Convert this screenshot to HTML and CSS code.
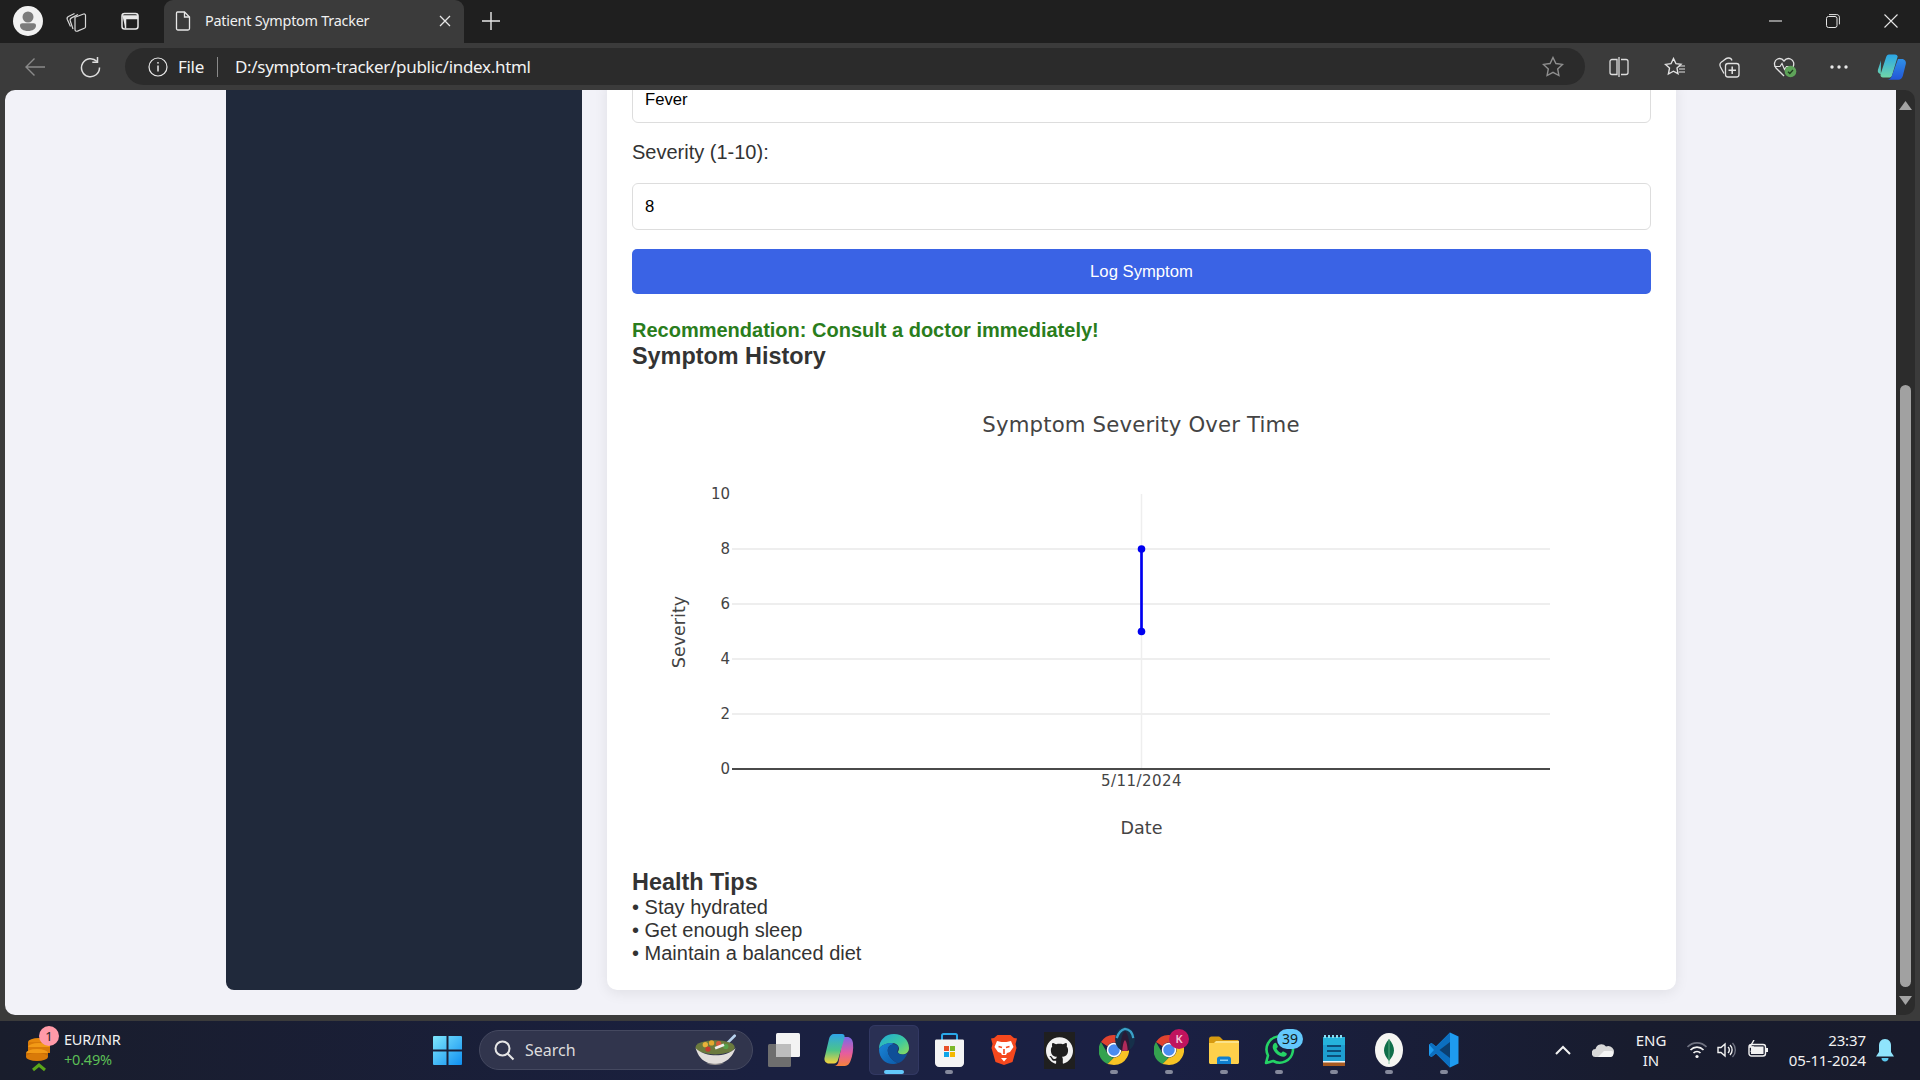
FILE: index.html
```html
<!DOCTYPE html>
<html lang="en">
<head>
<meta charset="utf-8">
<title>Patient Symptom Tracker</title>
<link rel="stylesheet" href="styles.css">
</head>
<body>
<div class="window">
  <header class="titlebar">
    <span class="tb-btn avatar-slot"><svg width="30" height="30" viewBox="0 0 30 30"><circle cx="15" cy="15" r="15" fill="#f2f2f2"/><circle cx="15" cy="11" r="5.5" fill="#7c7c7c"/><path d="M7 19.5c0-1.5 1-2.300 2.400-2.300h11.200c1.400 0 2.400.8 2.400 2.300 0 3.400-3.400 5.500-8 5.500s-8-2.100-8-5.500z" fill="#7c7c7c"/></svg></span>
    <span class="tb-btn workspaces-slot"><svg width="24" height="24" viewBox="0 0 24 24" fill="none" stroke="#d8d8d8" stroke-width="1.200"><path d="M5.500 17.500L2.300 10.500c-.5-1.300-.1-2.400 1.100-3l6.100-3"/><path d="M8 20L5.300 12c-.4-1.300 0-2.500 1.200-3.100l6.500-3.400"/><path d="M10 8.200l8.600-3.200c1-.3 1.900.3 1.900 1.300v11.400c0 .8-.4 1.300-1.200 1.600l-6.800 2.800c-1.300.5-2.500-.3-2.500-1.700z"/></svg></span>
    <span class="tb-btn tabs-slot"><svg width="20" height="20" viewBox="0 0 20 20" fill="none" stroke="#e8e8e8" stroke-width="1.500"><rect x="2" y="2.500" width="16" height="15.500" rx="2.500"/><path d="M2.500 5h15v2.500H5.500v10" fill="#e8e8e8"/></svg></span>
    <div class="tab">
      <svg class="tab-doc" width="16" height="20" viewBox="0 0 16 20" fill="none" stroke="#e8e8e8" stroke-width="1.300"><path d="M2.500 1h7l5 5v11.500c0 .9-.7 1.500-1.500 1.500H3c-.9 0-1.500-.6-1.500-1.500v-15C1.500 1.500 1.800 1 2.500 1z"/><path d="M9.500 1v5h5"/></svg>
      <span class="tab-title">Patient Symptom Tracker</span>
      <svg class="tab-close" width="12" height="12" viewBox="0 0 12 12" stroke="#e8e8e8" stroke-width="1.300"><path d="M1 1l10 10M11 1L1 11"/></svg>
    </div>
    <svg class="new-tab" width="18" height="18" viewBox="0 0 18 18" stroke="#e8e8e8" stroke-width="1.400"><path d="M9 0v18M0 9h18"/></svg>
    <div class="win-controls">
      <span class="win-btn win-min"><svg width="14" height="14" viewBox="0 0 14 14" stroke="#e6e6e6" stroke-width="1.100"><path d="M0 7h13"/></svg></span>
      <span class="win-btn"><svg width="14" height="14" viewBox="0 0 14 14" fill="none" stroke="#e6e6e6" stroke-width="1"><rect x=".5" y="2.500" width="10.500" height="11" rx="2"/><path d="M3 .6h7.800c1.400 0 2.600 1.100 2.600 2.600v7.200"/></svg></span>
      <span class="win-btn"><svg width="14" height="14" viewBox="0 0 14 14" stroke="#e6e6e6" stroke-width="1.100"><path d="M.5.500l13 13M13.500.500l-13 13"/></svg></span>
    </div>
  </header>

  <nav class="toolbar">
    <span class="tool-btn"><svg width="22" height="20" viewBox="0 0 22 20" fill="none" stroke="#8a8a8a" stroke-width="1.400"><path d="M21 10H2M10.500 1.500L2 10l8.500 8.500"/></svg></span>
    <span class="tool-btn"><svg width="22" height="22" viewBox="0 0 22 22" fill="none" stroke="#dedede" stroke-width="1.500"><path d="M18 5.500a9 9 0 1 0 2.500 6"/><path d="M18.500 1v5.200h-5.200"/></svg></span>
    <div class="address">
      <svg class="info" width="20" height="20" viewBox="0 0 20 20" fill="none" stroke="#e8e8e8" stroke-width="1.200"><circle cx="10" cy="10" r="9"/><path d="M10 8.500v6" stroke-width="1.500"/><circle cx="10" cy="5.800" r=".9" fill="#e8e8e8" stroke="none"/></svg>
      <span class="addr-file">File</span>
      <span class="addr-sep"></span>
      <span class="addr-url">D:/symptom-tracker/public/index.html</span>
      <svg class="addr-star" width="22" height="21" viewBox="0 0 22 21" fill="none" stroke="#8f8f8f" stroke-width="1.400"><path d="M11 1.500l2.900 6 6.600.9-4.800 4.600 1.200 6.500-5.900-3.200-5.900 3.200 1.200-6.500L1.500 8.400l6.600-.9z"/></svg>
    </div>
    <span class="tool-btn first-right"><svg width="20" height="20" viewBox="0 0 20 20" fill="none" stroke="#dcdcdc" stroke-width="1.300"><path d="M8 2.500H3a2 2 0 0 0-2 2v11a2 2 0 0 0 2 2h5zM12 2.500h5a2 2 0 0 1 2 2v11a2 2 0 0 1-2 2h-5"/><path d="M10 0v20"/></svg></span>
    <span class="tool-btn fav-btn"><svg width="22" height="20" viewBox="0 0 22 20" fill="none" stroke="#e2e2e2" stroke-width="1.400"><path d="M9.500 1.500l2.500 5.200 5 .6-4 3.800 1 5.600-4.600-2.500-5 2.800 1.100-5.900L1.500 7.400l5.500-.7z"/><path d="M15 9h6M15 12h6M15 15h6" stroke-width="1.200"/></svg></span>
    <span class="tool-btn coll-btn"><svg width="22" height="22" viewBox="0 0 22 22" fill="none" stroke="#e2e2e2" stroke-width="1.300"><path d="M6 17.500L2.500 11c-1-2 -.6-3.800 1-5l1.800-1.300C6.500 3.800 8 2 10 2h1c1.500 0 2.500 1 3 2.500"/><rect x="7.500" y="7.500" width="13.500" height="13.500" rx="2.500"/><path d="M14.200 10.500v7.500M10.500 14.200H18" stroke-width="1.500"/></svg></span>
    <span class="tool-btn health-btn"><svg width="24" height="22" viewBox="0 0 24 22" fill="none"><path d="M11 20L3 12C.5 9 1.200 4.500 4.500 3c2.500-1 5 0 6.500 2 1.500-2 4-3 6.500-2 3.300 1.500 4 5 2.500 8" stroke="#e2e2e2" stroke-width="1.300"/><path d="M1.500 10.500H7l2-3 2.500 6 2-3h3" stroke="#e2e2e2" stroke-width="1.200"/><circle cx="17.500" cy="15.500" r="5.800" fill="#5fa45a"/><path d="M15 15.700l1.800 1.800 3.200-3.500" stroke="#1f3b1e" stroke-width="1.300"/></svg></span>
    <span class="tool-btn"><svg width="18" height="4" viewBox="0 0 18 4" fill="#e8e8e8"><circle cx="2" cy="2" r="1.700"/><circle cx="9" cy="2" r="1.700"/><circle cx="16" cy="2" r="1.700"/></svg></span>
    <span class="copilot-slot"><svg width="30" height="28" viewBox="0 0 30 28"><defs><linearGradient id="cpA" x1="0" y1="0" x2="0" y2="1"><stop offset="0" stop-color="#2aa6e8"/><stop offset="1" stop-color="#6fd6a8"/></linearGradient><linearGradient id="cpB" x1="0" y1="0" x2="0" y2="1"><stop offset="0" stop-color="#2f8fe6"/><stop offset="1" stop-color="#2257d8"/></linearGradient></defs><path d="M12 1h6c1.500 0 2.300.8 2.700 2L15 22c-.5 1.600-1.500 2-3 2H6c-1.400-.1-2.800-1.200-2.500-3L9 4c.5-1.800 1.500-3 3-3zM4 7l-3 9c-.8 2.500.5 4.300 2.800 4.500z" fill="url(#cpA)" transform="translate(0,.5)"/><path d="M21 4h4c2.500 0 4.500 2.500 3.800 5l-3 12c-.7 2.400-2.300 3.700-4.500 3.700H10c2.500 0 4-1.500 4.800-3.700z" fill="url(#cpB)" transform="translate(0,2)"/></svg></span>
  </nav>

  <div class="viewport">
    <main class="page">
      <div class="container">
        <aside class="sidebar"></aside>
        <section class="card">
          <input class="field" type="text" value="Fever">
          <label class="field-label">Severity (1-10):</label>
          <input class="field" type="text" value="8">
          <button class="submit" type="button">Log Symptom</button>
          <p class="recommendation">Recommendation: Consult a doctor immediately!</p>
          <h3 class="heading">Symptom History</h3>
          <svg class="chart" width="1019" height="500" viewBox="0 0 1019 500">
            <text class="c-title" x="509" y="63" text-anchor="middle">Symptom Severity Over Time</text>
            <g class="c-grid">
              <path class="c-grid-v" d="M509.500 125V400"/>
              <path d="M100 180H918M100 235H918M100 290H918M100 345H918"/>
            </g>
            <path class="c-zero" d="M100 400H918"/>
            <g class="c-tick" text-anchor="end">
              <text x="98" y="130">10</text>
              <text x="98" y="185">8</text>
              <text x="98" y="240">6</text>
              <text x="98" y="295">4</text>
              <text x="98" y="350">2</text>
              <text x="98" y="405">0</text>
            </g>
            <text class="c-tick c-date" x="509.500" y="417" text-anchor="middle">5/11/2024</text>
            <text class="c-axis" x="509.500" y="465" text-anchor="middle">Date</text>
            <text class="c-axis" transform="translate(53 263) rotate(-90)" text-anchor="middle">Severity</text>
            <path class="c-line" d="M509.500 180V262"/>
            <circle class="c-dot" cx="509.500" cy="180" r="3.800"/>
            <circle class="c-dot" cx="509.500" cy="262.500" r="3.800"/>
          </svg>
          <h3 class="tips-title">Health Tips</h3>
          <ul class="tips">
            <li>• Stay hydrated</li>
            <li>• Get enough sleep</li>
            <li>• Maintain a balanced diet</li>
          </ul>
        </section>
      </div>
    </main>
    <div class="scrollbar">
      <svg width="13" height="9" viewBox="0 0 13 9" fill="#a3a3a3"><path d="M6.500 0L13 9H0z"/></svg>
      <div class="scroll-track"><div class="scroll-thumb"></div></div>
      <svg width="13" height="9" viewBox="0 0 13 9" fill="#a3a3a3"><path d="M0 0h13L6.500 9z"/></svg>
    </div>
  </div>

  <footer class="taskbar">
    <div class="widget">
      <span class="widget-icon">
        <svg width="30" height="42" viewBox="0 0 30 42"><ellipse cx="14" cy="10" rx="11" ry="4" fill="#e8890c"/><rect x="3" y="10" width="22" height="5" fill="#d97a08"/><ellipse cx="14" cy="15" rx="11" ry="4" fill="#f29a16"/><rect x="3" y="15" width="22" height="6" fill="#d97a08"/><ellipse cx="12" cy="21" rx="11" ry="4" fill="#f29a16"/><rect x="1" y="21" width="22" height="4" fill="#c96e06"/><ellipse cx="12" cy="25" rx="11" ry="4" fill="#d97a08"/><path d="M8 38l6-5 6 5" fill="none" stroke="#5aa51a" stroke-width="3"/></svg>
        <span class="widget-badge">1</span>
      </span>
      <div class="widget-text"><div>EUR/INR</div><div class="widget-up">+0.49%</div></div>
    </div>
    <span class="start"><svg width="29" height="29" viewBox="0 0 29 29"><defs><linearGradient id="win" x1="0" y1="0" x2="1" y2="1"><stop offset="0" stop-color="#7fe6fd"/><stop offset="1" stop-color="#0f8ff0"/></linearGradient></defs><path d="M1 0h12.500v13.500H0V1a1 1 0 0 1 1-1zM15.500 0H28a1 1 0 0 1 1 1v12.500H15.500zM0 15.500h13.500V29H1a1 1 0 0 1-1-1zM15.500 15.500H29V28a1 1 0 0 1-1 1H15.500z" fill="url(#win)"/></svg></span>
    <div class="search">
      <svg width="22" height="22" viewBox="0 0 22 22" fill="none" stroke="#e6e6e6" stroke-width="2"><circle cx="9.500" cy="9.500" r="7"/><path d="M14.500 14.500l6 6"/></svg>
      <span class="search-text">Search</span>
      <svg class="bowl" width="46" height="32" viewBox="0 0 50 36"><path d="M36 12L46 2" stroke="#b9d3ee" stroke-width="3" stroke-linecap="round"/><ellipse cx="24" cy="15" rx="22" ry="8" fill="#6b7a3e"/><circle cx="13" cy="12" r="3" fill="#e8b23a"/><circle cx="20" cy="10" r="3" fill="#e2a82e"/><circle cx="28" cy="11" r="3" fill="#d65a3a"/><circle cx="36" cy="14" r="3" fill="#58a04a"/><circle cx="16" cy="17" r="3" fill="#c23b2e"/><path d="M24 16l10-4" stroke="#eee" stroke-width="3"/><path d="M2 16c2 5 4 12 13 16 6 2.500 12 2.500 18 0 9-4 12-11 14-16-6 6-14 8-22 8s-17-2-23-8z" fill="#e2dedb"/><path d="M14 33c6 2.500 14 2.500 20 0-6 .5-14 .5-20 0z" fill="#9a9592"/></svg>
    </div>
    <div class="apps">
      <span class="app"><svg width="32" height="34" viewBox="0 0 32 34"><rect x="0" y="11" width="23" height="23" rx="1.500" fill="#6e6e6e"/><rect x="8" y="0" width="24" height="24" rx="1.500" fill="#f3f3f3"/><rect x="8" y="11" width="15" height="13" fill="#bdbdbd"/></svg></span>
      <span class="app"><svg width="30" height="34" viewBox="0 0 30 34"><defs><linearGradient id="coA" x1="0" y1="0" x2="0" y2="1"><stop offset="0" stop-color="#2fa4e8"/><stop offset=".55" stop-color="#4cc48a"/><stop offset="1" stop-color="#f5d33c"/></linearGradient><linearGradient id="coB" x1="0" y1="0" x2="0" y2="1"><stop offset="0" stop-color="#7a6ae8"/><stop offset=".55" stop-color="#e65ca0"/><stop offset="1" stop-color="#f5823c"/></linearGradient></defs><path d="M19 4h4c3.500 0 5.500 2.500 6 6 .7 6-.5 13-2.500 18-.8 2.500-2.800 5-5.500 5H10c2.500 0 4-2 4.500-4z" fill="url(#coB)"/><path d="M10 1h8c2 0 3 1.500 2.500 3.500L14 27c-.6 2-2 3.500-4 3.500H5C2 30.500 0 28 .5 25L5 6c.6-3 2.500-5 5-5z" fill="url(#coA)"/></svg></span>
      <span class="app app-active"><svg width="30" height="32" viewBox="0 0 30 32"><defs><linearGradient id="edA" x1="0" y1="0" x2="1" y2="1"><stop offset="0" stop-color="#1fa8d8"/><stop offset=".55" stop-color="#3cc8a0"/><stop offset="1" stop-color="#8fdc5a"/></linearGradient><linearGradient id="edB" x1="0" y1="0" x2="1" y2="1"><stop offset="0" stop-color="#1a86d8"/><stop offset="1" stop-color="#0c5aa8"/></linearGradient></defs><path d="M0 15C0 6 6.500 0 15 0s15 6 15 14c0 4-3 6.500-6.500 6.500-2.500 0-4.500-1-4.500-2.500 0-1 1-1.500 1-3.500 0-3-3-5.500-6.500-5.500C7 9 2 11.500 0 15z" fill="url(#edA)"/><path d="M0 15c2-3.500 7-6 11.500-6 1.500 0 3 .5 4 1.200C10 10.500 8 14 9 18.500c1 4.500 5 8.500 10 10.500-1.500.8-3.500 1-5 1C6 30 0 24 0 15z" fill="url(#edB)"/><path d="M15.500 10.200c3 .4 4.500 3 3.500 4.800-1 2-1 4 1.500 5 3 1.200 6 .5 8-1-2.500 6-6 9.500-9.500 10C14 27 10 23 9 18.500 8 14 10 10.500 15.500 10.200z" fill="#0f4f98"/></svg><i class="running-bar"></i></span>
      <span class="app"><svg width="29" height="34" viewBox="0 0 29 34"><path d="M7 7V2.500C7 1.500 7.500 1 8.500 1h12c1 0 1.500.5 1.500 1.500V7" fill="none" stroke="#2aa8e8" stroke-width="2"/><path d="M0 8c0-1 .5-1.500 1.500-1.500h26c1 0 1.500.5 1.500 1.500v22c0 2.200-1.800 4-4 4H4c-2.200 0-4-1.800-4-4z" fill="#f4f4f4"/><rect x="9" y="13" width="5" height="5" fill="#e8502a"/><rect x="15" y="13" width="5" height="5" fill="#7cb82a"/><rect x="9" y="19" width="5" height="5" fill="#0ea5e8"/><rect x="15" y="19" width="5" height="5" fill="#f5b800"/></svg><i class="dot"></i></span>
      <span class="app"><svg width="26" height="30" viewBox="0 0 26 30"><path d="M6.500 0h13L23 3l3 .5L24.500 9l1 4-4 14-8.500 3-8.500-3-4-14 1-4L0 3.500 3 3z" fill="#f5481e"/><path d="M6 6l4.500 1h5L20 6l2.500 6-3.500 5-3 1-1 2h-4l-1-2-3-1-3.500-5z" fill="#fff"/><path d="M10 23h6l-3 3.500z" fill="#fff"/><path d="M7.500 11.500l3.500 1M18.500 11.500l-3.500 1M13 14v5" stroke="#f5481e" stroke-width="1.600" fill="none"/></svg></span>
      <span class="app"><span class="gh-tile"><svg width="27" height="27" viewBox="0 0 24 24" fill="#f2f2f2"><path d="M12 .297c-6.630 0-12 5.373-12 12 0 5.303 3.438 9.800 8.205 11.385.6.113.82-.258.82-.577 0-.285-.01-1.040-.015-2.040-3.338.724-4.042-1.610-4.042-1.610C4.422 18.070 3.633 17.700 3.633 17.700c-1.087-.744.084-.729.084-.729 1.205.084 1.838 1.236 1.838 1.236 1.070 1.835 2.809 1.305 3.495.998.108-.776.417-1.305.76-1.605-2.665-.3-5.466-1.332-5.466-5.930 0-1.310.465-2.380 1.235-3.220-.135-.303-.54-1.523.105-3.176 0 0 1.005-.322 3.300 1.230.96-.267 1.980-.399 3-.405 1.020.006 2.040.138 3 .405 2.280-1.552 3.285-1.230 3.285-1.230.645 1.653.25 2.873.12 3.176.765.84 1.230 1.910 1.230 3.220 0 4.610-2.805 5.625-5.475 5.920.42.360.81 1.096.81 2.220 0 1.606-.015 2.896-.015 3.286 0 .315.21.690.825.570C20.565 22.092 24 17.592 24 12.297c0-6.627-5.373-12-12-12"/></svg></span></span>
      <span class="app"><svg class="chrome" width="30" height="30" viewBox="0 0 30 30"><path d="M15 0a15 15 0 0 1 13 7.500H15a7.500 7.500 0 0 0-6.500 3.750L2 7A15 15 0 0 1 15 0z" fill="#e0432f"/><path d="M2 7l6.500 11.250A7.500 7.500 0 0 0 15 22.500L8.500 29A15 15 0 0 1 2 7z" fill="#34a24f"/><path d="M28 7.500A15 15 0 0 1 15 30l-6.500-1 6.500-6.500a7.500 7.500 0 0 0 6.500-11.250z" fill="#f7c325"/><circle cx="15" cy="15" r="6.500" fill="#4a8cf0" stroke="#fff" stroke-width="1.500"/></svg><span class="profile profile-photo"><svg width="20" height="24" viewBox="0 0 20 26"><path d="M5 26c0-9 1-18 5-22 4 4 5 13 5 22z" fill="#2a1a35"/><path d="M7 26c.5-6 1-10 3-12 2 2 2.500 6 3 12z" fill="#b02a5a"/><path d="M1 12C3 6 6 3 10 2c5 .5 8 4 9 10" fill="none" stroke="#3aa0c8" stroke-width="2.500"/></svg></span><i class="dot"></i></span>
      <span class="app"><svg class="chrome" width="30" height="30" viewBox="0 0 30 30"><path d="M15 0a15 15 0 0 1 13 7.500H15a7.500 7.500 0 0 0-6.500 3.750L2 7A15 15 0 0 1 15 0z" fill="#e0432f"/><path d="M2 7l6.500 11.250A7.500 7.500 0 0 0 15 22.500L8.500 29A15 15 0 0 1 2 7z" fill="#34a24f"/><path d="M28 7.500A15 15 0 0 1 15 30l-6.500-1 6.500-6.500a7.500 7.500 0 0 0 6.500-11.250z" fill="#f7c325"/><circle cx="15" cy="15" r="6.500" fill="#4a8cf0" stroke="#fff" stroke-width="1.500"/></svg><span class="profile profile-k">K</span><i class="dot"></i></span>
      <span class="app"><svg width="30" height="28" viewBox="0 0 30 28"><path d="M0 3c0-1.500 1-2.500 2.500-2.500h7c1 0 1.500.5 2.500 1.500L14 4h14.500c.8 0 1.500.7 1.500 1.500V10H0z" fill="#d69a10"/><path d="M0 7h30v19.500c0 .8-.7 1.500-1.500 1.500h-27C.7 28 0 27.300 0 26.500z" fill="#fdd04b"/><path d="M5 7l2-2h23v2z" fill="#fbe38a"/><path d="M8 23c0-1.500 1-2.500 2.500-2.500h9c1.500 0 2.500 1 2.500 2.500v5H8z" fill="#0f7fd0"/><rect x="11" y="23.500" width="8" height="1.500" fill="#8dd0f5"/></svg><i class="dot"></i></span>
      <span class="app"><svg width="32" height="32" viewBox="0 0 32 32" fill="none"><path d="M3 29l2-7.500A13.200 13.200 0 1 1 10.300 27z" stroke="#25d366" stroke-width="2.600" stroke-linejoin="round"/><path d="M11 9.500c1-1 2-1 2.500 0l1.200 2.500c.3.600 0 1.300-.5 1.800l-.7.700c1 2 2.500 3.500 4.700 4.500l1-1c.5-.5 1-.6 1.700-.3l2.300 1.200c.8.500.8 1.500 0 2.500-1.500 1.600-3.500 1.700-6 .6-3.500-1.500-6-4-7.200-7.300-.7-2-.2-3.800 1-5.200z" fill="#25d366"/></svg><span class="count-badge">39</span><i class="dot"></i></span>
      <span class="app"><svg width="22" height="31" viewBox="0 0 22 31"><path d="M0 2h22v27H0z" fill="#1e9fd0"/><path d="M0 2h22v8H0z" fill="#25b3dc"/><path d="M2 0v3M6 0v3M10 0v3M14 0v3M18 0v3" stroke="#8adcf0" stroke-width="2"/><path d="M4 11h14M4 16h14M4 21h14" stroke="#0c4f7a" stroke-width="2"/><path d="M0 27h22v4H0z" fill="#a85a20"/><path d="M0 26h22v1.500H0z" fill="#eaf6fa"/></svg><i class="dot"></i></span>
      <span class="app"><svg width="28" height="34" viewBox="0 0 28 34"><ellipse cx="14" cy="17" rx="14" ry="17" fill="#f5f5f2"/><path d="M14 6c3.500 4 5 8 5 11.500S16.500 25 14 28c-2.500-3-5-7-5-10.500S10.500 10 14 6z" fill="#0f6e4a"/><path d="M14 6v25" stroke="#6bb890" stroke-width=".8"/></svg><i class="dot"></i></span>
      <span class="app"><svg width="30" height="36" viewBox="0 0 30 36"><path d="M21 .5l8.500 4v27l-8.500 4L7 21.500l-4.500 3.500L0 23.500v-11L2.500 11 7 14.500z" fill="#1e9bf0"/><path d="M21 .5L7 14.500 2.500 11 0 12.500 5 18 0 23.500 2.500 25 7 21.500l14 14z" fill="#0c6fc0"/><path d="M21 10v16l-10.500-8z" fill="#0c3f70"/></svg><i class="dot"></i></span>
    </div>
    <div class="tray">
      <span class="tray-slot chev"><svg width="16" height="10" viewBox="0 0 16 10" fill="none" stroke="#f2f2f2" stroke-width="2"><path d="M1 9l7-7 7 7"/></svg></span>
      <span class="tray-slot cloud"><svg width="22" height="14" viewBox="0 0 22 14"><path d="M4 14a4 4 0 0 1-.5-8A6 6 0 0 1 14 3.500 4.500 4.500 0 0 1 18.500 14z" fill="#d8d8d8"/><path d="M6 14l6-6 8 0c2 1 2 6-1.500 6z" fill="#f5f5f5"/></svg></span>
      <div class="lang"><div>ENG</div><div>IN</div></div>
      <span class="tray-slot sys"><svg width="20" height="18" viewBox="0 0 20 18" fill="none" stroke="#f2f2f2" stroke-width="1.700"><path d="M.5 6a13 13 0 0 1 19 0" stroke="#6f7280"/><path d="M3.500 9a9 9 0 0 1 13 0"/><path d="M6.500 12a5 5 0 0 1 7 0"/><circle cx="10" cy="15.500" r="1.600" fill="#f2f2f2" stroke="none"/></svg></span>
      <span class="tray-slot sys"><svg width="20" height="18" viewBox="0 0 20 18" fill="none" stroke="#f2f2f2" stroke-width="1.400"><path d="M1 6.500h3L8 3v12l-4-3.500H1z"/><path d="M11 6a4 4 0 0 1 0 6M13 4a7 7 0 0 1 0 10"/><path d="M15.500 2a10 10 0 0 1 0 14" stroke="#6f7280"/></svg></span>
      <span class="tray-slot batt"><svg width="21" height="20" viewBox="0 0 21 20" fill="none"><rect x="1" y="4.500" width="16.500" height="11.500" rx="2.500" stroke="#f2f2f2" stroke-width="1.400"/><rect x="3" y="6.500" width="12.500" height="7.500" fill="#f2f2f2"/><path d="M19 8v4" stroke="#f2f2f2" stroke-width="2"/><path d="M6 0L2 7h3l-2 5" stroke="#f2f2f2" stroke-width="1.400"/></svg></span>
      <div class="clock"><div>23:37</div><div>05-11-2024</div></div>
      <span class="tray-slot bell"><svg width="18" height="23" viewBox="0 0 18 23"><path d="M9 0c-4 0-6 3-6 6.500V13L0 17.500h18L15 13V6.500C15 3 13 0 9 0z" fill="#8fe4fc"/><path d="M5.500 19h7c0 2-1.500 3.500-3.500 3.500S5.500 21 5.500 19z" fill="#5cc8ee"/></svg></span>
    </div>
  </footer>
</div>
</body>
</html>
```

FILE: styles.css
```css
* { box-sizing: border-box; }
html, body { margin: 0; height: 100%; overflow: hidden; }
body { font-family: "Liberation Sans", Arial, sans-serif; background: #3b3b3b; }
svg { display: block; flex: none; }

.window { width: 1920px; height: 1080px; display: flex; flex-direction: column; }

/* Browser title bar */
.titlebar { height: 43px; flex: none; background: #1f1f1f; display: flex; align-items: center; padding-bottom: 1px; }
.tb-btn { display: flex; align-items: center; justify-content: center; }
.avatar-slot { width: 56px; }
.workspaces-slot { width: 42px; }
.tabs-slot { width: 64px; }
.tab { width: 300px; height: 43px; align-self: flex-start; margin-left: 2px; background: #3b3b3b; border-radius: 9px 9px 0 0; display: flex; align-items: center; padding: 0 13px 1px 11px; color: #f0f0f0; }
.tab-title { margin-left: 14px; font: 14.4px/1 "Noto Sans", sans-serif; letter-spacing: -.25px; white-space: nowrap; }
.tab-close { margin-left: auto; }
.new-tab { margin-left: 18px; }
.win-controls { margin-left: auto; display: flex; }
.win-btn { width: 58px; display: flex; justify-content: center; }
.win-min { width: 56px; }

/* Browser toolbar */
.toolbar { height: 47px; flex: none; background: #3b3b3b; display: flex; align-items: center; padding-left: 7.5px; }
.tool-btn { width: 55px; display: flex; justify-content: center; align-items: center; }
.address { width: 1460px; height: 37px; margin: 0 0 0 7.5px; background: #2b2b2b; border-radius: 19px; display: flex; align-items: center; padding: 0 21px 0 23px; color: #f2f2f2; font: 17px/1 "Noto Sans", sans-serif; letter-spacing: -.3px; }
.addr-file { margin-left: 10px; }
.addr-sep { width: 1px; height: 20px; background: #8a8a8a; margin: 0 16.5px 0 13.5px; }
.addr-star { margin-left: auto; }
.first-right { margin-left: 6.500px; }
.fav-btn, .health-btn { position: relative; left: 1px; }
.copilot-slot { width: 51px; display: flex; justify-content: center; }

/* Page viewport */
.viewport { height: 925px; flex: none; margin-left: 5px; margin-right: 5px; display: flex; }
.page { flex: 1; min-width: 0; height: 925px; overflow: hidden; background: #f2f2f8; border-radius: 10px 0 0 10px; display: flex; flex-direction: column; justify-content: flex-end; padding-bottom: 25px; }
.container { width: 1450px; margin-left: 221px; display: flex; gap: 25px; }
.sidebar { width: 356px; flex: none; background: #20293b; border-radius: 8px; }
.card { width: 1069px; flex: none; background: #fff; border-radius: 10px; padding: 0 25px 25px; box-shadow: 0 3px 14px rgba(0, 0, 0, .08); color: #333; display: flex; flex-direction: column; }

.field { display: block; width: 100%; height: 47px; border: 1px solid #ddd; border-radius: 6px; padding: 0 12px; font: 16.67px "Liberation Sans", Arial, sans-serif; color: #000; background: #fff; outline: none; flex: none; }
.field-label { display: block; font-size: 20px; line-height: 23px; margin: 18px 0 19px; color: #333; }
.submit { display: block; width: 100%; height: 45px; flex: none; margin-top: 19px; border: 0; border-radius: 5px; background: #3a63e5; color: #fff; font: 16.67px "Liberation Sans", Arial, sans-serif; }
.recommendation { margin: 24px 0 0; font-size: 20px; font-weight: 700; line-height: 25px; color: #2a7d1c; }
.heading { margin: 0; font-size: 23.4px; font-weight: 700; line-height: 26px; color: #333; }

.c-title { font: 21.25px "DejaVu Sans", sans-serif; fill: #444; letter-spacing: .15px; }
.c-tick { font: 15px "DejaVu Sans", sans-serif; fill: #444; }
.c-date { letter-spacing: .45px; }
.c-axis { font: 17.5px "DejaVu Sans", sans-serif; fill: #444; }
.c-grid path { stroke: #eeeeee; stroke-width: 2; fill: none; }
.c-grid .c-grid-v { stroke-width: 1.500; }
.c-zero { stroke: #4a4a4a; stroke-width: 2; fill: none; }
.c-line { stroke: #0000f0; stroke-width: 2.700; fill: none; }
.c-dot { fill: #0000f0; }

.tips-title { margin: 0 0 1px; font-size: 23.4px; font-weight: 700; line-height: 26px; color: #333; }
.tips { margin: 0; padding: 0; list-style: none; font-size: 20px; line-height: 23px; color: #333; }

/* Scrollbar */
.scrollbar { width: 19px; flex: none; background: #2c2c2c; border-radius: 0 10px 10px 0; display: flex; flex-direction: column; align-items: center; padding: 10.5px 0 10.5px; gap: 9px; }
.scroll-track { flex: 1; width: 11px; display: flex; align-items: flex-end; }
.scroll-thumb { width: 11px; height: 602px; background: #a1a1a1; border-radius: 6px; }

/* Taskbar */
.taskbar { height: 59px; flex: none; margin-top: 6px; padding-bottom: 1px; display: flex; align-items: center; background: linear-gradient(90deg, #191d2c 0%, #1a2040 40%, #1a2044 60%, #181c2e 85%, #181b2c 100%); color: #f2f2f2; font-family: "Noto Sans", sans-serif; }
.widget { width: 420px; flex: none; display: flex; align-items: center; padding-left: 25px; }
.widget-icon { position: relative; display: block; width: 30px; height: 42px; margin-top: 6px; }
.widget-badge { position: absolute; left: 14px; top: -6px; width: 20px; height: 20px; border-radius: 50%; background: #ff9aa8; color: #222; font-size: 13px; line-height: 20px; text-align: center; }
.widget-text { margin: 0 0 3px 9px; font-size: 14.500px; line-height: 20px; letter-spacing: -.2px; }
.widget-up { color: #5cbf56; }
.start { width: 55px; display: flex; justify-content: center; flex: none; }
.search { width: 274px; height: 40px; margin-left: 4px; flex: none; border-radius: 20px; background: #31354d; border: 1px solid #454960; display: flex; align-items: center; padding-left: 13px; font-size: 16px; color: #dcdcdc; }
.search-text { margin-left: 10px; }
.bowl { margin-left: auto; margin-right: 13px; }
.apps { display: flex; margin-left: 3.500px; }
.app { width: 55px; height: 50px; flex: none; display: flex; align-items: center; justify-content: center; position: relative; }
.app-active { background: #2a3054; border-radius: 6px; width: 50px; margin: 0 2.500px; box-shadow: inset 0 0 0 1px #323862; }
.running-bar { position: absolute; left: 15px; bottom: 1px; width: 20px; height: 4px; background: #63c8fb; border-radius: 2px; }
.dot { position: absolute; left: 23.500px; bottom: 1px; width: 8px; height: 4px; background: #85899c; border-radius: 2px; }
.gh-tile { width: 31px; height: 37px; background: #1f1f1f; display: flex; align-items: center; justify-content: center; }
.profile { position: absolute; left: 27.5px; top: 3.5px; width: 20px; height: 20px; border-radius: 50%; }
.profile-photo { background: #16304a; left: 28px; top: 2px; height: 24px; overflow: hidden; }
.profile-k { background: #c0145e; color: #f4c4d8; font-size: 11px; line-height: 20px; text-align: center; font-weight: 600; }
.count-badge { position: absolute; left: 25.5px; top: 3.5px; width: 26px; height: 20px; border-radius: 10px; background: #63c8fb; color: #122; font-size: 14px; line-height: 20px; text-align: center; }
.tray { margin-left: auto; display: flex; align-items: center; padding-right: 16px; font-size: 15px; }
.tray-slot { display: flex; justify-content: center; align-items: center; flex: none; }
.chev, .cloud { width: 40px; }
.lang { width: 56px; text-align: center; line-height: 20px; margin-right: 3px; }
.sys { width: 30px; }
.batt { width: 32px; }
.clock { width: 92px; margin-bottom: 1px; text-align: right; line-height: 20px; letter-spacing: -.1px; white-space: nowrap; }
.bell { width: 38px; }
```
